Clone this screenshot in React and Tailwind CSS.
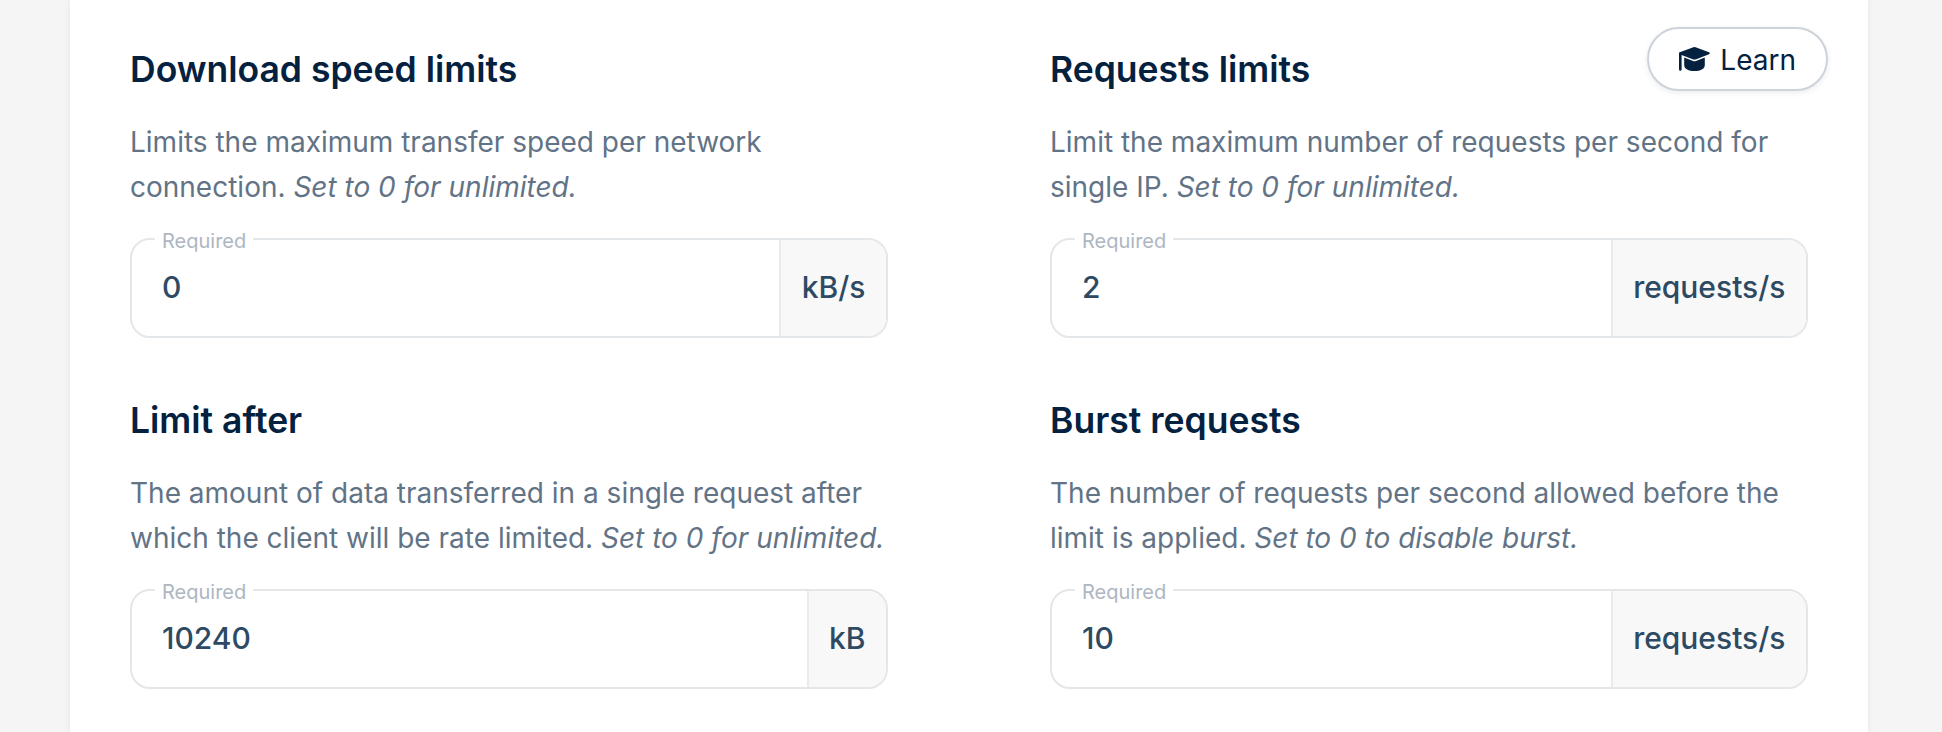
const CapIcon = () => (
  <svg viewBox="0 0 31 24" className="h-6 w-[31px]" fill="currentColor">
    <path d="M14.4.3a3 3 0 0 1 2.2 0l13.4 5a1 1 0 0 1 0 1.9l-13.4 5.2a3 3 0 0 1-2.2 0L2.6 7.9v14.6a1.3 1.3 0 0 1-2.6 0V6.3a1 1 0 0 1 .7-1z" />
    <path d="M5.2 10.4l8.8 3.5a4 4 0 0 0 3 0l8.8-3.5v7.8c0 3.6-4.600 5.800-10.300 5.800S5.200 21.800 5.200 18.200z" />
  </svg>
);

const Limit = ({ title, children, hint, value, unit }) => (
  <div>
    <h3 className="text-[35.5px] leading-[44px] font-semibold text-[#04213f]">{title}</h3>
    <p className="mt-[28px] text-[28px] leading-[44.8px] text-[#627386]">
      {children} <em>{hint}</em>
    </p>
    <div className="relative mt-[28px] flex h-[100px] rounded-[20px] border-2 border-[#e4e7ea] bg-white">
      <span className="absolute -top-[11px] left-[23px] bg-white px-[7px] text-[20px] leading-6 text-[#aeb6c1]">
        Required
      </span>
      <div className="flex flex-1 items-center pl-[30px] text-[30px] font-medium text-[#2e4a63]">{value}</div>
      <div className="flex items-center rounded-r-[18px] border-l-2 border-[#e9ebee] bg-[#f8f8f9] px-[20.5px] text-[30px] font-medium text-[#2e4a63]">
        {unit}
      </div>
    </div>
  </div>
);

export default function App() {
  return (
    <div className="h-[732px] overflow-hidden bg-[#f5f5f5] pr-[74px] pl-[70px] font-['Inter',sans-serif]">
      <div className="relative h-full bg-white pt-[48px] pr-[60px] pl-[60px] shadow-[0_0_6px_rgba(0,0,0,0.07)]">
        <button className="absolute top-[27px] right-[40px] flex h-[64px] items-center gap-[10px] rounded-full border-2 border-[#cdd3da] bg-white px-[30px] text-[28px] text-[#04213f] shadow-[0_2px_6px_rgba(0,0,0,0.08)]">
          <CapIcon />
          <span className="pt-[2px]">Learn</span>
        </button>
        <div className="grid grid-cols-2 gap-x-[162px] gap-y-[61.4px]">
          <Limit
            title="Download speed limits"
            hint="Set to 0 for unlimited."
            value="0"
            unit="kB/s"
          >
            Limits the maximum transfer speed per network connection.
          </Limit>
          <Limit
            title="Requests limits"
            hint="Set to 0 for unlimited."
            value="2"
            unit="requests/s"
          >
            Limit the maximum number of requests per second for single IP.
          </Limit>
          <Limit
            title="Limit after"
            hint="Set to 0 for unlimited."
            value="10240"
            unit="kB"
          >
            The amount of data transferred in a single request after which the client will be rate limited.
          </Limit>
          <Limit
            title="Burst requests"
            hint="Set to 0 to disable burst."
            value="10"
            unit="requests/s"
          >
            The number of requests per second allowed before the limit is applied.
          </Limit>
        </div>
      </div>
    </div>
  );
}
